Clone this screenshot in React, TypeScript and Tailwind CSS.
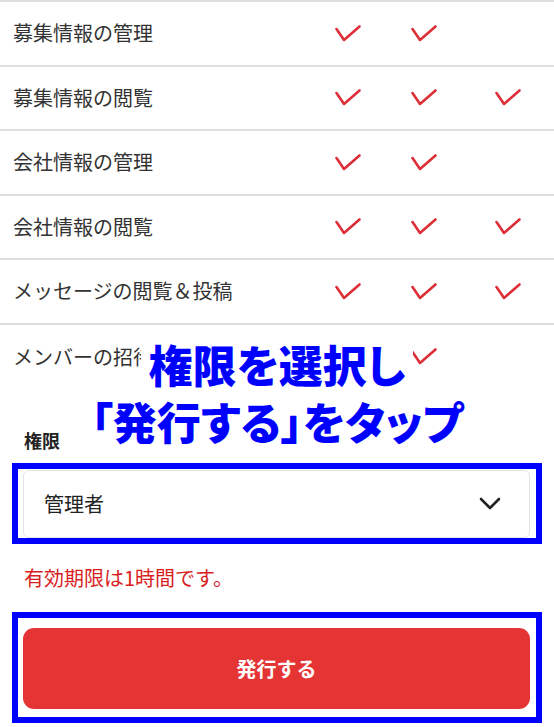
import React from 'react';

type Row = {
  label: string;
  checks: [boolean, boolean, boolean];
};

const rows: Row[] = [
  { label: '募集情報の管理', checks: [true, true, false] },
  { label: '募集情報の閲覧', checks: [true, true, true] },
  { label: '会社情報の管理', checks: [true, true, false] },
  { label: '会社情報の閲覧', checks: [true, true, true] },
  { label: 'メッセージの閲覧＆投稿', checks: [true, true, true] },
  { label: 'メンバーの招待', checks: [true, true, false] },
];

function CheckMark() {
  return (
    <svg width="26" height="18" viewBox="0 0 26 18" fill="none">
      <polyline
        points="1.5,4 9,15 24.5,1.5"
        stroke="#dc2f37"
        strokeWidth="2.6"
        strokeLinecap="round"
        strokeLinejoin="round"
      />
    </svg>
  );
}

function ChevronDown() {
  return (
    <svg width="22" height="14" viewBox="0 0 22 14" fill="none">
      <polyline
        points="2,2 11,11 20,2"
        stroke="#222"
        strokeWidth="2.6"
        strokeLinecap="round"
        strokeLinejoin="round"
      />
    </svg>
  );
}

export default function App() {
  return (
    <div className="relative w-[554px] h-[727px] overflow-hidden bg-white font-['Noto_Sans_CJK_JP','Noto_Sans',sans-serif] text-[#333]">
      {/* 権限一覧 */}
      <div className="border-t-2 border-[#dedede]">
        {rows.map((row, i) => (
          <div
            key={row.label}
            className={`grid grid-cols-[1fr_76px_76px_92px] items-center h-[64.5px] ${
              i < rows.length - 1 ? 'border-b-2 border-[#dedede]' : ''
            }`}
          >
            <span className="pl-[13px] text-[20px] leading-none">{row.label}</span>
            {row.checks.map((c, j) => (
              <div key={j} className="flex justify-center pt-[1px]">
                {c && <CheckMark />}
              </div>
            ))}
          </div>
        ))}
      </div>

      {/* 発行フォーム */}
      <div className="px-[12px]">
        <p className="mt-[37px] pl-[12px] text-[18px] leading-[28px] font-bold text-[#222]">権限</p>

        <div className="mt-[9px] border-[6px] border-[#0000ff] pl-[5px] pr-[6px] pt-[1px]">
          <div className="flex items-center justify-between h-[68px] rounded-[6px] border border-[#e3e3e3] pl-[20px] pr-[28px]">
            <span className="text-[20px] text-[#222]">管理者</span>
            <ChevronDown />
          </div>
        </div>

        <p className="mt-[20px] pl-[12px] text-[20px] leading-[28px] text-[#d81e1e]">有効期限は1時間です。</p>

        <div className="mt-[20px] border-[6px] border-[#0000ff] pl-[5px] pr-[6px] pt-[10px] pb-[8px]">
          <button className="flex w-full h-[81px] items-center justify-center rounded-[11px] bg-[#e53434] text-[20px] font-bold text-white">
            発行する
          </button>
        </div>
      </div>

      {/* 注釈 */}
      <div className="absolute left-0 right-0 top-[336px] flex flex-col items-center font-['Noto_Sans_CJK_JP',sans-serif] font-black text-[44px] leading-[57px] text-[#0000ff] [font-feature-settings:'palt']">
        <span className="bg-white px-[8px]">権限を選択し</span>
        <span className="px-[2px] [-webkit-text-stroke:6px_white] [paint-order:stroke_fill]">「発行する」をタップ</span>
      </div>
    </div>
  );
}
